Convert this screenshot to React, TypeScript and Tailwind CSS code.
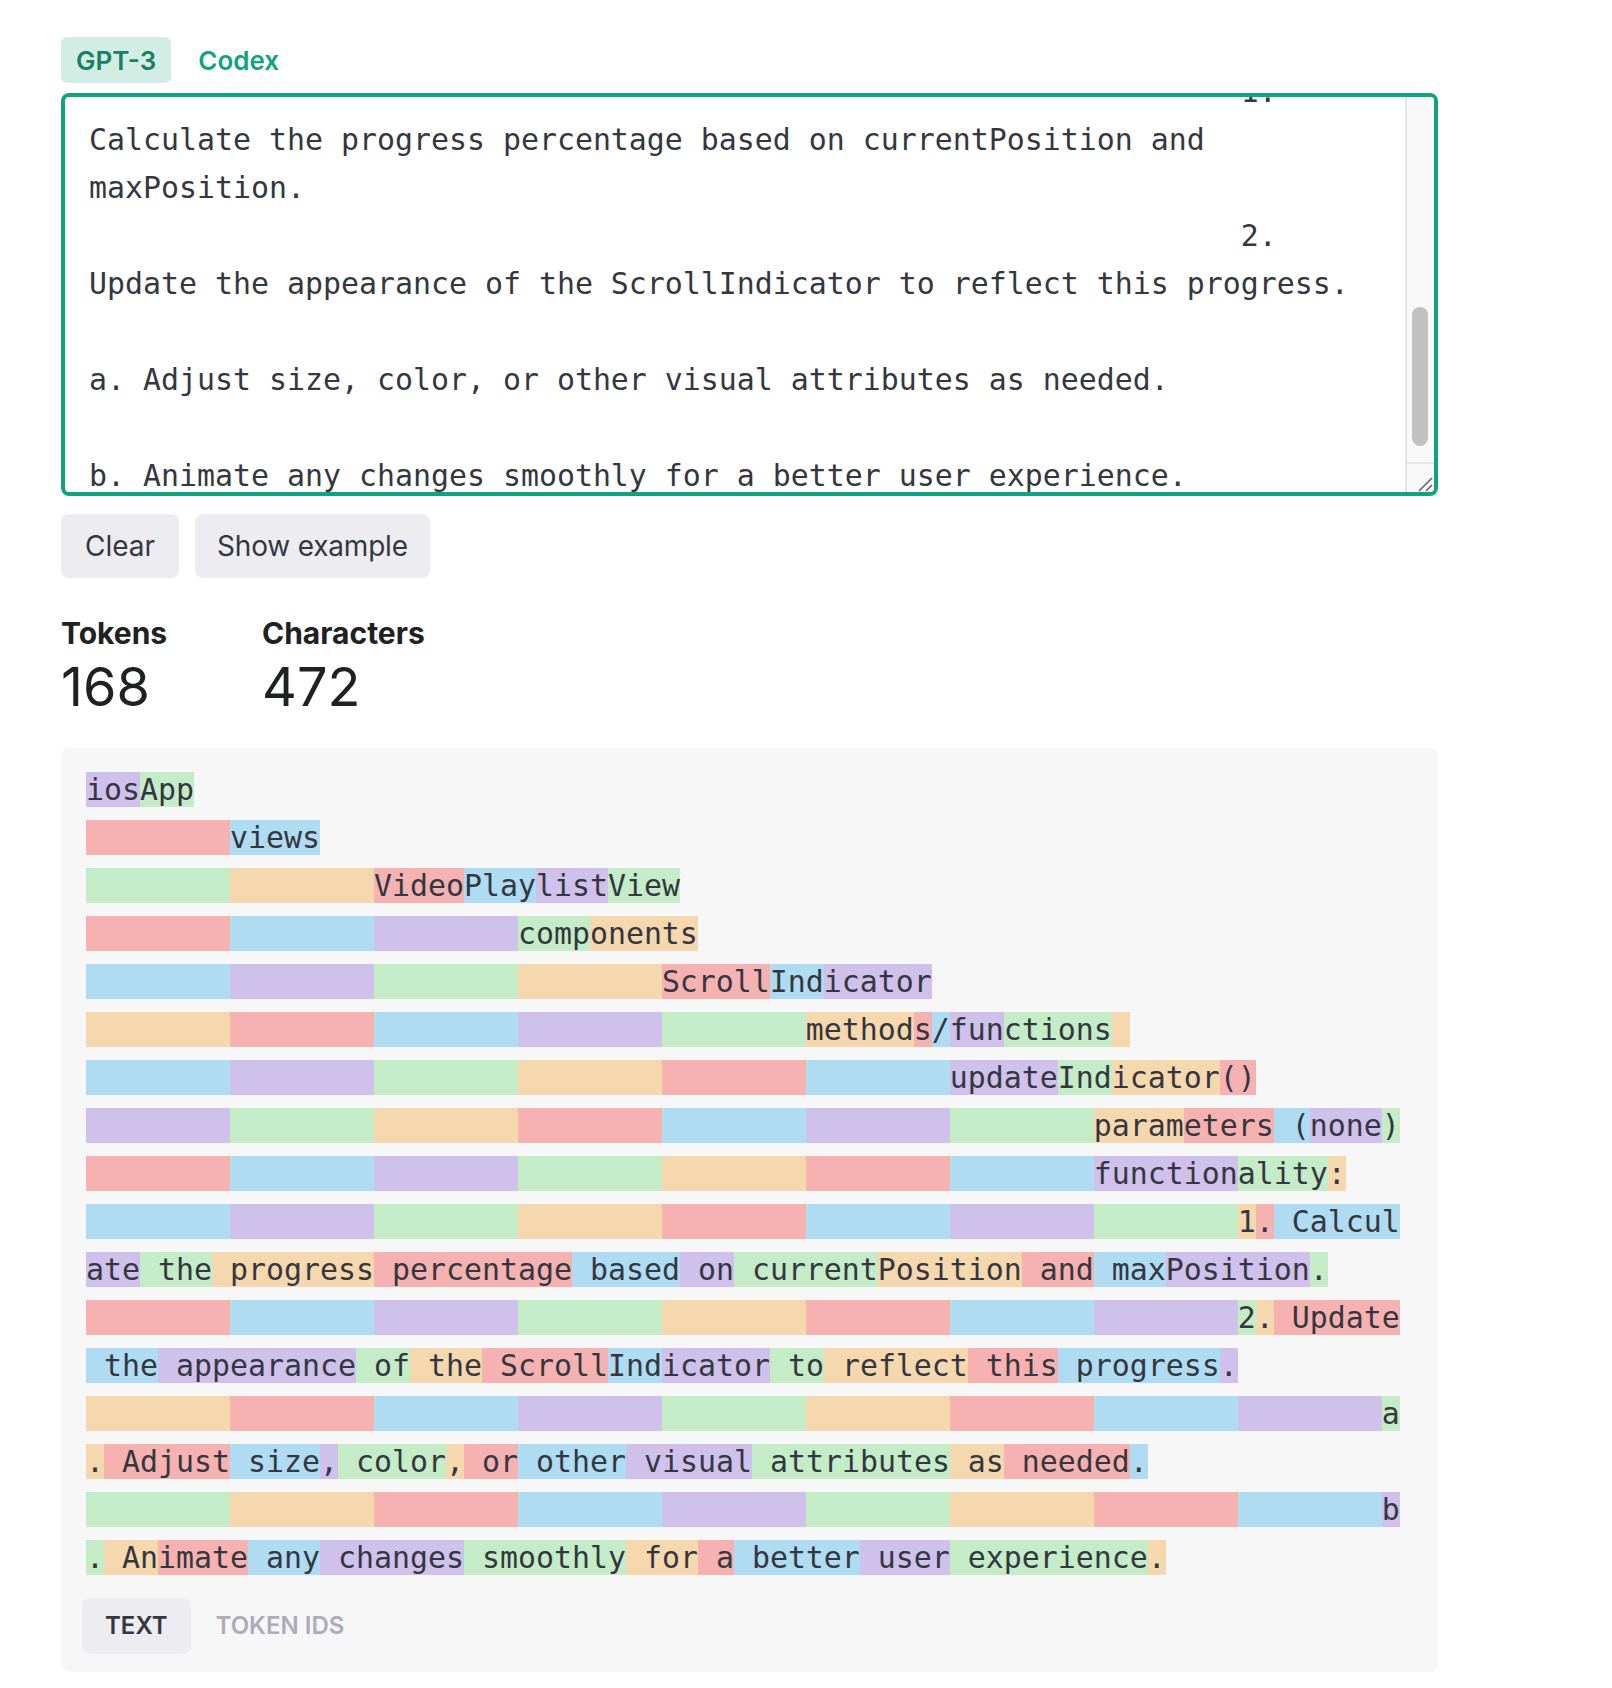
import React from 'react';

const SP = '        ';
const sp = (n: number) => Array(n).fill(SP);

// same text that sits in the textarea
const INPUT = [
  'iosApp',
  SP + 'views',
  SP.repeat(2) + 'VideoPlaylistView',
  SP.repeat(3) + 'components',
  SP.repeat(4) + 'ScrollIndicator',
  SP.repeat(5) + 'methods/functions ',
  SP.repeat(6) + 'updateIndicator()',
  SP.repeat(7) + 'parameters (none)',
  SP.repeat(7) + 'functionality:',
  SP.repeat(8) + '1. Calculate the progress percentage based on currentPosition and maxPosition.',
  SP.repeat(8) + '2. Update the appearance of the ScrollIndicator to reflect this progress.',
  SP.repeat(9) + 'a. Adjust size, color, or other visual attributes as needed.',
  SP.repeat(9) + 'b. Animate any changes smoothly for a better user experience.',
].join('\n');

// visual rows of the token view; nl = a newline token follows (takes a colour, draws nothing)
const ROWS: { tokens: string[]; nl: boolean }[] = [
  { tokens: ['ios', 'App'], nl: true },
  { tokens: [...sp(1), 'views'], nl: true },
  { tokens: [...sp(2), 'Video', 'Play', 'list', 'View'], nl: true },
  { tokens: [...sp(3), 'comp', 'onents'], nl: true },
  { tokens: [...sp(4), 'Scroll', 'Ind', 'icator'], nl: true },
  { tokens: [...sp(5), 'method', 's', '/', 'fun', 'ctions', ' '], nl: true },
  { tokens: [...sp(6), 'update', 'Ind', 'icator', '()'], nl: true },
  { tokens: [...sp(7), 'param', 'eters', ' (', 'none', ')'], nl: true },
  { tokens: [...sp(7), 'function', 'ality', ':'], nl: true },
  { tokens: [...sp(8), '1', '.', ' Calcul'], nl: false },
  {
    tokens: ['ate', ' the', ' progress', ' percentage', ' based', ' on', ' current', 'Position', ' and', ' max', 'Position', '.'],
    nl: true,
  },
  { tokens: [...sp(8), '2', '.', ' Update'], nl: false },
  {
    tokens: [' the', ' appearance', ' of', ' the', ' Scroll', 'Ind', 'icator', ' to', ' reflect', ' this', ' progress', '.'],
    nl: true,
  },
  { tokens: [...sp(9), 'a'], nl: false },
  {
    tokens: ['.', ' Adjust', ' size', ',', ' color', ',', ' or', ' other', ' visual', ' attributes', ' as', ' needed', '.'],
    nl: true,
  },
  { tokens: [...sp(9), 'b'], nl: false },
  {
    tokens: ['.', ' An', 'imate', ' any', ' changes', ' smoothly', ' for', ' a', ' better', ' user', ' experience', '.'],
    nl: false,
  },
];

const COLORS = ['bg-[#cfc0ec]', 'bg-[#c3ecc7]', 'bg-[#f6d8ae]', 'bg-[#f6b2b1]', 'bg-[#afdcf2]'];

function TokenView() {
  let n = 0;
  return (
    <div className="whitespace-pre font-['DejaVu_Sans_Mono',monospace] text-[29.9px] leading-[48px] text-[#353740]">
      {ROWS.map((row, i) => {
        const line = (
          <div key={i}>
            {row.tokens.map((t, j) => {
              const c = COLORS[n % 5];
              n++;
              return (
                <span key={j} className={c}>
                  {t}
                </span>
              );
            })}
          </div>
        );
        if (row.nl) n++;
        return line;
      })}
    </div>
  );
}

export default function App() {
  return (
    <div className="min-h-screen bg-white font-['Inter',sans-serif] text-[#353740]">
      <div className="ml-[61px] w-[1377px] pt-[37px] pb-[15px]">
        {/* model tabs */}
        <div className="flex gap-[12px]">
          <button className="h-[46px] rounded-[6px] bg-[#d2ede4] px-[15px] text-[26px] font-semibold text-[#1a7f64]">
            GPT-3
          </button>
          <button className="h-[46px] rounded-[6px] px-[15px] text-[26px] font-semibold text-[#10a37f]">Codex</button>
        </div>

        {/* input box (scrolled to the end) */}
        <div className="mt-[10px] flex h-[403px] overflow-hidden rounded-[8px] border-4 border-[#10a37f]">
          <div className="flex-1 overflow-hidden pl-[24px] pr-[12px]">
            <div className="mt-[-509px] whitespace-pre-wrap font-['DejaVu_Sans_Mono',monospace] text-[29.9px] leading-[48px] text-[#353740]">
              {INPUT}
            </div>
          </div>
          <div className="flex w-[29px] flex-col border-l-2 border-[#e6e6e6] bg-[#f9f9f9]">
            <div className="mt-[210px] ml-[5px] h-[139px] w-[16px] rounded-full bg-[#c1c1c1]" />
            <div className="mt-auto h-[30px] border-t-2 border-[#e6e6e6]">
              <svg width="27" height="28" viewBox="0 0 27 28">
                <path d="M12 27 L25 14 M19 27 L25 21" stroke="#666" strokeWidth="1.6" />
              </svg>
            </div>
          </div>
        </div>

        {/* actions */}
        <div className="mt-[18px] flex gap-[16px]">
          <button className="h-[64px] rounded-[8px] bg-[#ececf1] px-[24px] text-[28px] text-[#353740]">Clear</button>
          <button className="h-[64px] rounded-[8px] bg-[#ececf1] px-[22px] text-[28px] tracking-[-0.2px] text-[#353740]">
            Show example
          </button>
        </div>

        {/* counts */}
        <div className="mt-[37px] flex">
          <div className="w-[201px]">
            <div className="text-[30px] font-bold leading-[36px] text-[#202123]">Tokens</div>
            <div className="mt-[4px] text-[54px] leading-[64px] text-[#202123]">168</div>
          </div>
          <div>
            <div className="text-[30px] font-bold leading-[36px] text-[#202123]">Characters</div>
            <div className="mt-[4px] text-[54px] leading-[64px] text-[#202123]">472</div>
          </div>
        </div>

        {/* tokenized output */}
        <div className="mt-[29px] rounded-[8px] bg-[#f7f7f8] pt-[18px] pb-[18px] pl-[25px] pr-[25px]">
          <TokenView />
          <div className="mt-[16px] -ml-[4px] flex gap-[2px]">
            <button className="h-[56px] rounded-[8px] bg-[#ececf1] px-[23px] text-[24px] font-semibold text-[#353740]">
              TEXT
            </button>
            <button className="h-[56px] rounded-[8px] px-[23px] text-[24px] font-semibold text-[#acacbe]">
              TOKEN IDS
            </button>
          </div>
        </div>
      </div>
    </div>
  );
}
